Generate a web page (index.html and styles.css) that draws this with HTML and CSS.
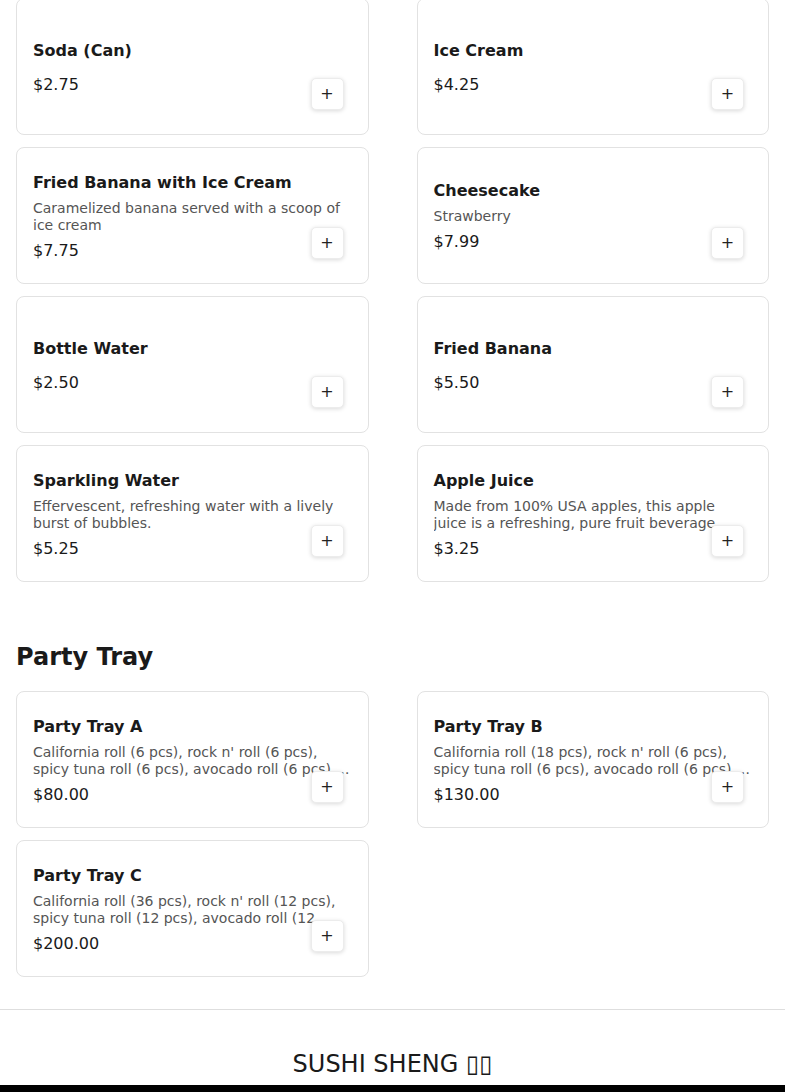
FILE: index.html
```html
<!DOCTYPE html>
<html lang="en">
<head>
<meta charset="utf-8">
<title>Sushi Sheng Menu</title>
<link rel="stylesheet" href="styles.css">
</head>
<body>
<main class="menu">
  <section class="section section-first">
    <div class="grid">
      <div class="card"><div class="info"><h3 class="title">Soda (Can)</h3><p class="price">$2.75</p></div><button class="add">+</button></div>
      <div class="card"><div class="info"><h3 class="title">Ice Cream</h3><p class="price">$4.25</p></div><button class="add">+</button></div>
      <div class="card"><div class="info"><h3 class="title">Fried Banana with Ice Cream</h3><p class="desc">Caramelized banana served with a scoop of ice cream</p><p class="price">$7.75</p></div><button class="add">+</button></div>
      <div class="card"><div class="info"><h3 class="title">Cheesecake</h3><p class="desc">Strawberry</p><p class="price">$7.99</p></div><button class="add">+</button></div>
      <div class="card"><div class="info"><h3 class="title">Bottle Water</h3><p class="price">$2.50</p></div><button class="add">+</button></div>
      <div class="card"><div class="info"><h3 class="title">Fried Banana</h3><p class="price">$5.50</p></div><button class="add">+</button></div>
      <div class="card"><div class="info"><h3 class="title">Sparkling Water</h3><p class="desc">Effervescent, refreshing water with a lively burst of bubbles.</p><p class="price">$5.25</p></div><button class="add">+</button></div>
      <div class="card"><div class="info"><h3 class="title">Apple Juice</h3><p class="desc">Made from 100% USA apples, this apple juice is a refreshing, pure fruit beverage.</p><p class="price">$3.25</p></div><button class="add">+</button></div>
    </div>
  </section>
  <section class="section">
    <h2 class="section-title">Party Tray</h2>
    <div class="grid">
      <div class="card"><div class="info"><h3 class="title">Party Tray A</h3><p class="desc">California roll (6 pcs), rock n' roll (6 pcs), spicy tuna roll (6 pcs), avocado roll (6 pcs), cucumber roll (6 pcs)</p><p class="price">$80.00</p></div><button class="add">+</button></div>
      <div class="card"><div class="info"><h3 class="title">Party Tray B</h3><p class="desc">California roll (18 pcs), rock n' roll (6 pcs), spicy tuna roll (6 pcs), avocado roll (6 pcs), cucumber roll (6 pcs)</p><p class="price">$130.00</p></div><button class="add">+</button></div>
      <div class="card"><div class="info"><h3 class="title">Party Tray C</h3><p class="desc">California roll (36 pcs), rock n' roll (12 pcs), spicy tuna roll (12 pcs), avocado roll (12 pcs), cucumber roll (12 pcs)</p><p class="price">$200.00</p></div><button class="add">+</button></div>
    </div>
  </section>
</main>
<footer class="footer">
  <div class="brand">SUSHI SHENG ▯▯</div>
  <div class="footer-bar"></div>
</footer>
</body>
</html>
```
FILE: styles.css
```css
* { box-sizing: border-box; }
html, body { margin: 0; padding: 0; background: #fff; }
body {
  font-family: "DejaVu Sans", sans-serif;
  color: #1a1a1a;
}
.menu { padding: 0 16px; }
.section-first { margin-top: -2px; }
.section { margin-bottom: 32px; }
.section-first { margin-bottom: 59px; }
.section-title {
  margin: 0 0 18px;
  font-size: 24px;
  line-height: 32px;
  font-weight: 700;
  color: #1a1a1a;
}
.grid {
  display: grid;
  grid-template-columns: 1fr 1fr;
  column-gap: 48px;
  row-gap: 12px;
}
.card {
  position: relative;
  height: 137px;
  border: 1px solid #e2e2e2;
  border-radius: 8px;
  padding: 16px;
  background: #fff;
  display: flex;
  flex-direction: column;
  justify-content: center;
}
.info { display: flex; flex-direction: column; padding-top: 2px; }
.title {
  margin: 0;
  font-size: 16px;
  line-height: 24px;
  font-weight: 700;
  color: #1a1a1a;
}
.desc {
  margin: 5px 0 0;
  font-size: 14px;
  line-height: 17px;
  color: #555;
  display: -webkit-box;
  -webkit-line-clamp: 2;
  -webkit-box-orient: vertical;
  overflow: hidden;
}
.price {
  margin: 5px 0 0;
  font-size: 16px;
  line-height: 24px;
  color: #1a1a1a;
}
.title + .price { margin-top: 10px; }
.add {
  position: absolute;
  right: 24px;
  bottom: 24px;
  width: 33px;
  height: 32px;
  padding: 0;
  border: 1px solid #ececec;
  border-radius: 5px;
  background: #fff;
  box-shadow: 0 1px 4px rgba(0,0,0,0.15);
  font-family: "DejaVu Sans", sans-serif;
  font-size: 16px;
  line-height: 1;
  color: #222;
  cursor: pointer;
}
.footer {
  border-top: 1px solid #dedede;
  padding-top: 36px;
  text-align: center;
}
.brand {
  font-size: 24px;
  line-height: 36px;
  color: #1a1a1a;
  margin-bottom: 3px;
}
.footer-bar {
  height: 60px;
  background: #000;
}
```
